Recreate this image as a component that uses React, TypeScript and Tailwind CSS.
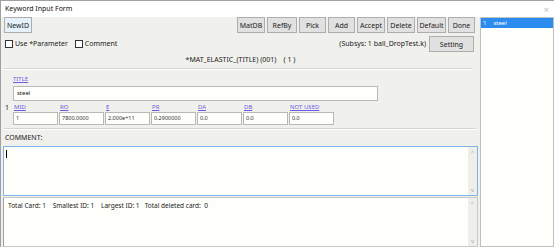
const buttons = [
  { label: 'MatDB', w: 'w-[28px]' },
  { label: 'RefBy', w: 'w-[30px]' },
  { label: 'Pick', w: 'w-[27px]' },
  { label: 'Add', w: 'w-[27px]' },
  { label: 'Accept', w: 'w-[28px]' },
  { label: 'Delete', w: 'w-[28px]' },
  { label: 'Default', w: 'w-[29px]' },
  { label: 'Done', w: 'w-[27px]' },
]

const fields = [
  { name: 'MID', value: '1' },
  { name: 'RO', value: '7800.0000' },
  { name: 'E', value: '2.000e+11' },
  { name: 'PR', value: '0.2900000' },
  { name: 'DA', value: '0.0' },
  { name: 'DB', value: '0.0' },
  { name: 'NOT USED', value: '0.0' },
]

function Btn({ label, className = '' }: { label: string; className?: string }) {
  return (
    <button
      className={`h-[16px] border border-[#adadad] bg-[#e1e1e1] text-[7px] text-[#222] leading-none ${className}`}
    >
      {label}
    </button>
  )
}

function Check({ label }: { label: string }) {
  return (
    <label className="flex items-center gap-[2px] text-[7px] text-[#222]">
      <span className="w-[8px] h-[8px] border border-[#333] bg-white" />
      {label}
    </label>
  )
}

function ScrollBar() {
  return (
    <div className="w-[9px] h-full bg-[#eeeeea] flex flex-col justify-between items-center py-[2px] text-[6px] text-[#aaa] leading-none">
      <span>^</span>
      <span>v</span>
    </div>
  )
}

export default function App() {
  return (
    <div
      className="w-[554px] h-[247px] overflow-hidden bg-[#f0f0ec] border-t border-l border-[#a0a0a0] flex flex-col"
      style={{ fontFamily: '"Noto Sans", "Open Sans", sans-serif' }}
    >
      {/* title bar */}
      <div className="h-[16px] bg-white flex items-center justify-between pl-[4px] pr-[5px] shrink-0">
        <span className="text-[7px] text-[#111]">Keyword Input Form</span>
        <span className="text-[9px] text-[#bbb] leading-none">×</span>
      </div>

      <div className="flex flex-1">
        {/* left form */}
        <div className="w-[477px] flex flex-col">
          <div className="flex items-center h-[16px] pl-[3px] pr-[3px]">
            <Btn label="NewID" className="w-[28px] border-[#3b8ee0] bg-[#e5f1fb]" />
            <div className="flex-1" />
            <div className="flex gap-[2px]">
              {buttons.map(b => (
                <Btn key={b.label} label={b.label} className={b.w} />
              ))}
            </div>
          </div>

          <div className="flex items-center h-[16px] mt-[3px] pl-[4px] pr-[4px]">
            <div className="flex gap-[7px]">
              <Check label="Use *Parameter" />
              <Check label="Comment" />
            </div>
            <div className="flex-1" />
            <span className="text-[7px] text-[#222] mr-[3px]">(Subsys: 1 ball_DropTest.k)</span>
            <Btn label="Setting" className="w-[45px] h-[16px]" />
          </div>

          <div className="h-[16px] flex items-center justify-center text-[7px] text-[#222] pl-[2px]">
            *MAT_ELASTIC_(TITLE) (001)&nbsp;&nbsp;&nbsp;&nbsp;( 1 )
          </div>

          <div className="ml-[3px] mr-[6px] border-t border-[#d4d4d0] border-b border-b-white" />

          {/* card */}
          <div className="pl-[12px] flex flex-col">
            <div className="h-[16px] flex items-center pt-[3px]">
              <a className="text-[6px] text-[#6b5ce7] underline">TITLE</a>
            </div>
            <div className="w-[365px] h-[15px] border border-[#b8b8b4] bg-[#fefefa] flex items-center pl-[3px] text-[6px] text-[#222]">
              steel
            </div>
            <div className="flex items-center h-[10px] -ml-[8px] mt-[1px]">
              <span className="w-[8px] text-[7px] text-[#222] leading-none">1</span>
              {fields.map(f => (
                <div key={f.name} className="w-[46px] text-[6px] leading-none pl-[1px]">
                  <a className="text-[#6b5ce7] underline">{f.name}</a>
                </div>
              ))}
            </div>
            <div className="flex gap-[1px]">
              {fields.map(f => (
                <div
                  key={f.name}
                  className="w-[45px] h-[13px] border border-[#b8b8b4] bg-[#fefefa] flex items-center pl-[2px] text-[5.5px] text-[#333]"
                >
                  {f.value}
                </div>
              ))}
            </div>
          </div>

          <div className="mt-[3px] ml-[3px] mr-[2px] border-t border-[#d4d4d0] border-b border-b-white" />

          <div className="h-[16px] flex items-center pl-[4px] text-[7px] text-[#222]">COMMENT:</div>

          <div className="ml-[2px] h-[50px] border border-[#7eb4ea] bg-[#fefefa] flex">
            <div className="flex-1 pl-[2px] pt-[3px]">
              <div className="w-[1px] h-[8px] bg-black" />
            </div>
            <ScrollBar />
          </div>

          <div className="ml-[2px] mt-[1px] flex-1 border border-[#c8c8c4] border-l-[#a0a0a0] bg-[#fefefa] flex">
            <div className="flex-1 pl-[4px] pt-[3px] text-[6.5px] text-[#222] whitespace-pre">
              {'Total Card: 1    Smallest ID: 1    Largest ID: 1   Total deleted card:  0'}
            </div>
            <ScrollBar />
          </div>
        </div>

        {/* right list */}
        <div className="ml-[2px] w-[74px] border border-[#c0c0bc] bg-[#fefefa]">
          <div className="h-[10px] bg-[#2b8cf0] flex items-center text-[6px] text-white pl-[2px] gap-[7px]">
            <span>1</span>
            <span>steel</span>
          </div>
        </div>
      </div>
    </div>
  )
}
